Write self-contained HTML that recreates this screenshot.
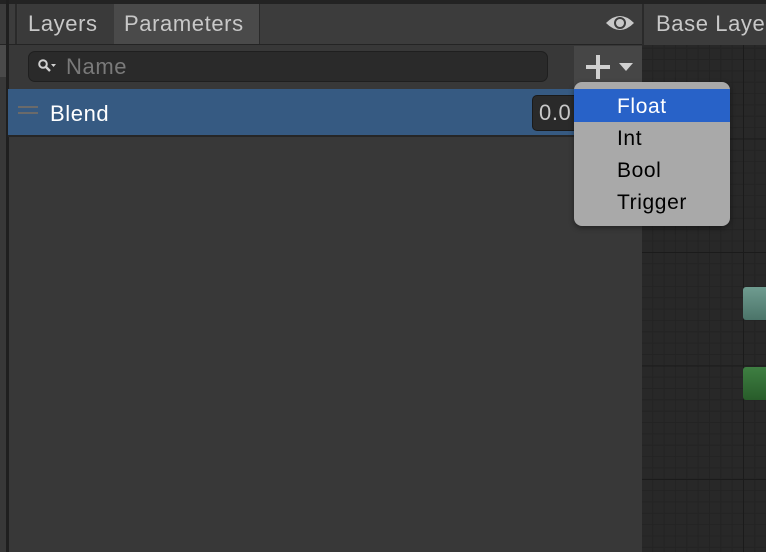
<!DOCTYPE html>
<html><head><meta charset="utf-8"><style>
*{margin:0;padding:0;box-sizing:border-box}
body{width:766px;height:552px;overflow:hidden;background:#383838;font-family:"Liberation Sans",sans-serif;position:relative;letter-spacing:0.6px}
.a{position:absolute}
</style></head><body>
<div class="a" style="left:0;top:0;width:766px;height:4px;background:#232323"></div>
<div class="a" style="left:0;top:4px;width:766px;height:41px;background:#3c3c3c"></div>
<div class="a" style="left:0;top:44px;width:642px;height:1px;background:#242424"></div>
<div class="a" style="left:6px;top:0;width:3px;height:552px;background:#1f1f1f"></div>
<div class="a" style="left:0;top:45px;width:6px;height:32px;background:#4a4a4a"></div>
<div class="a" style="left:15px;top:4px;width:2px;height:40px;background:#2a2a2a"></div>
<div class="a" style="left:18px;top:4px;width:96px;height:40px;background:#3a3a3a;color:#c8c8c8;font-size:22px;line-height:40px;padding-left:10px">Layers</div>
<div class="a" style="left:114px;top:4px;width:146px;height:40px;background:#4a4a4a;border-right:1px solid #2a2a2a;color:#c8c8c8;font-size:22px;line-height:40px;padding-left:10px">Parameters</div>
<svg class="a" style="left:604px;top:12px" width="32" height="22" viewBox="0 0 32 22"><path d="M2 11 Q16 -3 30 11 Q16 25 2 11Z" fill="#c8c8c8"/><circle cx="16" cy="11" r="6" fill="#3c3c3c"/><circle cx="16" cy="11" r="4" fill="#c8c8c8"/></svg>
<div class="a" style="left:642px;top:4px;width:2px;height:41px;background:#2a2a2a"></div>
<div class="a" style="left:656px;top:4px;color:#c8c8c8;font-size:22px;line-height:40px;white-space:nowrap">Base Layer</div>
<div class="a" style="left:642px;top:45px;width:124px;height:507px;background:#282828;background-image:linear-gradient(#1b1b1b 1px,transparent 1px),linear-gradient(90deg,#1b1b1b 1px,transparent 1px),linear-gradient(#232323 1px,transparent 1px),linear-gradient(90deg,#232323 1px,transparent 1px);background-size:113.5px 113.5px,113.5px 113.5px,11.35px 11.35px,11.35px 11.35px;background-position:0 -20px,101px 0,0 -20px,101px 0"></div>
<div class="a" style="left:743px;top:287px;width:30px;height:33px;border-radius:3px;background:linear-gradient(#6f9c90,#4b7469)"></div>
<div class="a" style="left:743px;top:367px;width:30px;height:33px;border-radius:3px;background:linear-gradient(#3e7f42,#285c2a)"></div>
<div class="a" style="left:28px;top:51px;width:520px;height:31px;border-radius:7px;background:#2a2a2a;border:1px solid #1f1f1f"></div>
<svg class="a" style="left:37px;top:58px" width="22" height="16" viewBox="0 0 22 16"><circle cx="6" cy="6" r="3.8" fill="none" stroke="#d0d0d0" stroke-width="2"/><path d="M8.5 8.5 L13 13" stroke="#d0d0d0" stroke-width="2.4"/><path d="M14 6 L19 6 L16.5 9Z" fill="#d0d0d0"/></svg>
<div class="a" style="left:66px;top:51px;color:#7a7a7a;font-size:22px;line-height:31px">Name</div>
<div class="a" style="left:574px;top:46px;width:68px;height:42px;background:#464646"></div>
<div class="a" style="left:586px;top:65px;width:24px;height:4px;background:#d0d0d0"></div>
<div class="a" style="left:596px;top:55px;width:4px;height:24px;background:#d0d0d0"></div>
<div class="a" style="left:619px;top:63px;width:0;height:0;border-left:7px solid transparent;border-right:7px solid transparent;border-top:8px solid #d0d0d0"></div>
<div class="a" style="left:8px;top:89px;width:634px;height:48px;background:#365a82;border-bottom:2px solid #262626"></div>
<div class="a" style="left:18px;top:106px;width:20px;height:2px;background:#6a6a6a"></div>
<div class="a" style="left:18px;top:112px;width:20px;height:2px;background:#6a6a6a"></div>
<div class="a" style="left:50px;top:90px;color:#fff;font-size:22px;line-height:48px">Blend</div>
<div class="a" style="left:532px;top:95px;width:60px;height:36px;border-radius:5px;background:#2a2a2a;border:1px solid #1a1a1a;color:#c8c8c8;font-size:22px;line-height:34px;padding-left:6px">0.0</div>
<div class="a" style="left:574px;top:82px;width:156px;height:144px;border-radius:8px;background:#a9a9a9;box-shadow:0 2px 6px rgba(0,0,0,.4);overflow:hidden">
<div style="margin-top:7px;height:33px;background:#2862c8;color:#fff;font-size:21px;line-height:35px;padding-left:43px">Float</div>
<div style="height:32px;color:#000;font-size:21px;line-height:34px;padding-left:43px">Int</div>
<div style="height:32px;color:#000;font-size:21px;line-height:34px;padding-left:43px">Bool</div>
<div style="height:32px;color:#000;font-size:21px;line-height:34px;padding-left:43px">Trigger</div>
</div>
</body></html>
